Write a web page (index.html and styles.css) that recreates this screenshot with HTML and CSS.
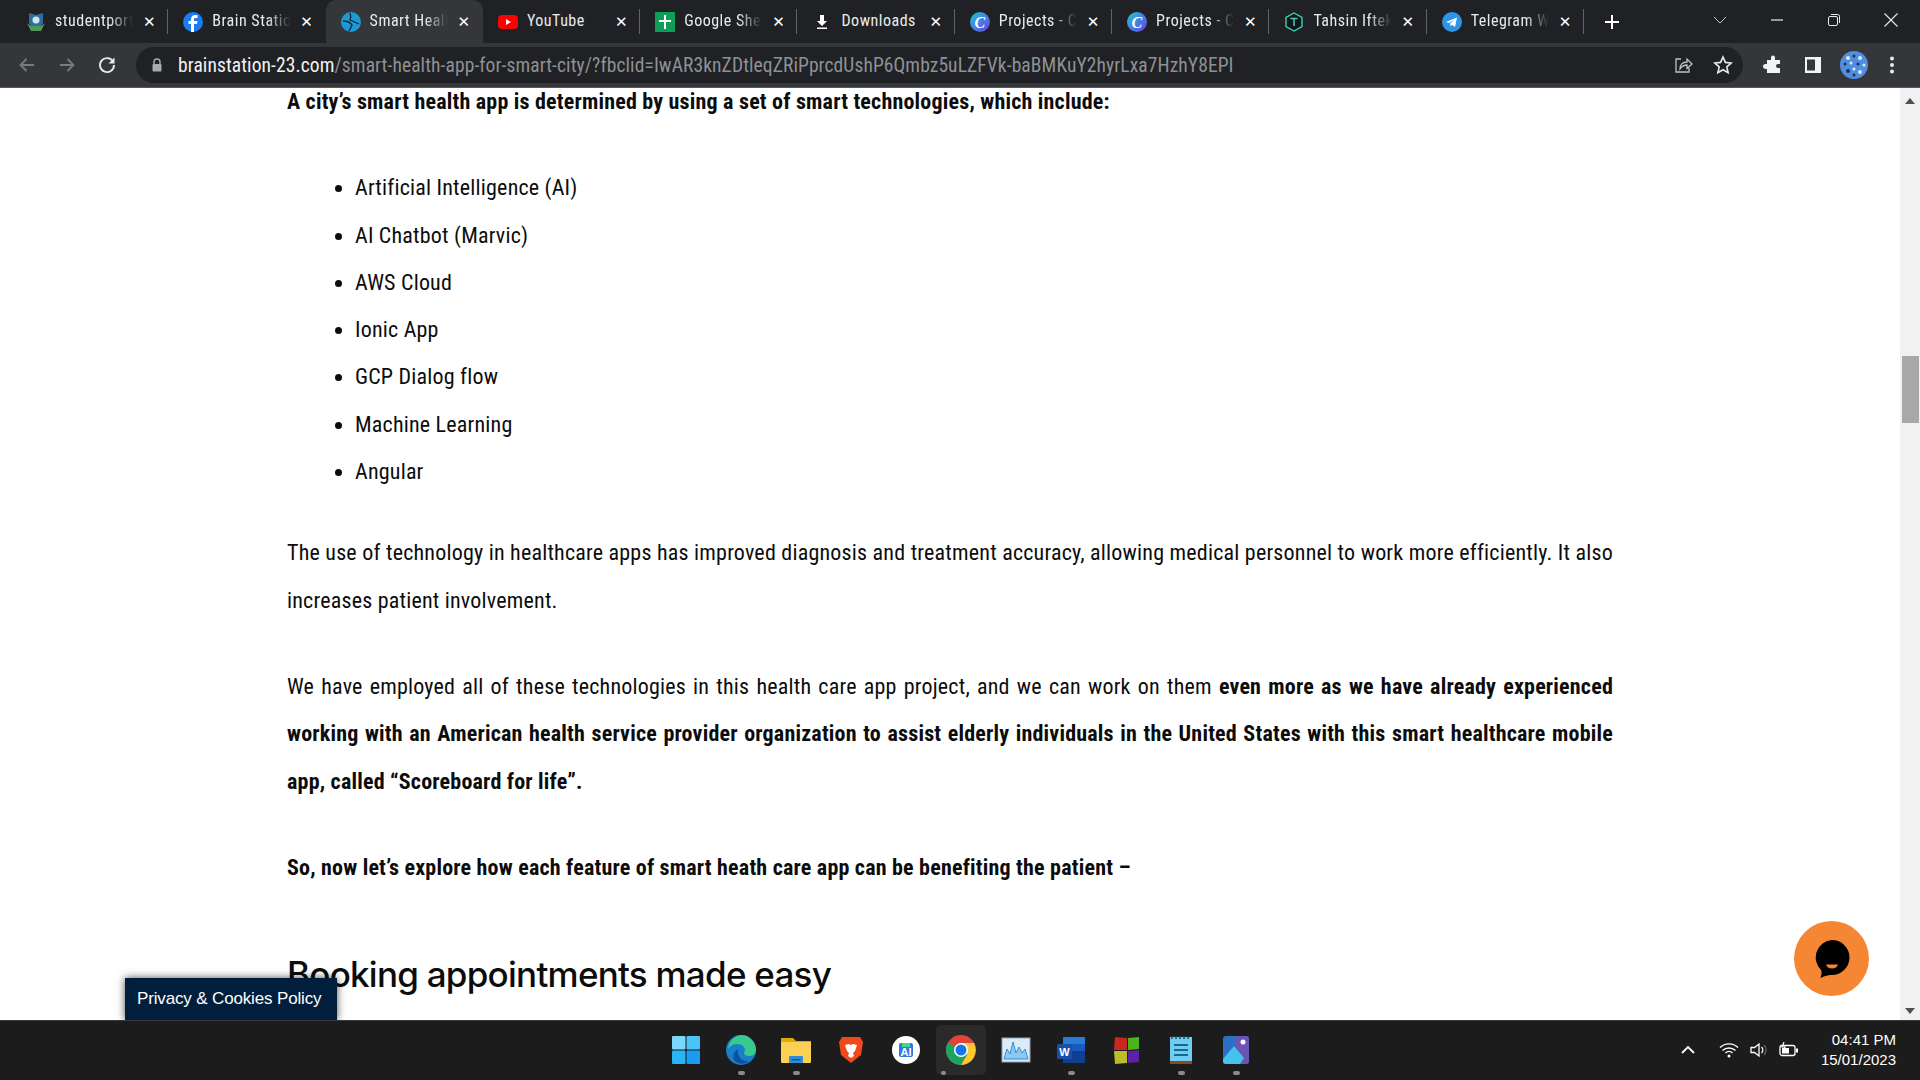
FILE: index.html
```html
<!DOCTYPE html>
<html lang="en">
<head>
    <meta charset="UTF-8">
    <title>Smart Health App</title>
    <link rel="stylesheet" href="styles.css">
</head>
<body>
<div class="screen">

    <!-- tab strip -->
    <div class="tabbar">
        <div class="tab">
            <svg class="favicon" viewBox="0 0 20 20"><path d="M3 1l7 2 7-2v10l-2 3H5l-2-3z" fill="#2f6f9f"/><circle cx="10" cy="8" r="3.500" fill="#cfe3f0"/><path d="M1 11l4 8h10l4-8-4 3H5z" fill="#4f9a57"/></svg>
            <span class="tab-title">studentportal</span>
            <span class="tab-close">✕</span>
        </div>
        <div class="tab">
            <svg class="favicon" viewBox="0 0 20 20"><circle cx="10" cy="10" r="10" fill="#1b7cf0"/><path d="M11 20v-8h3l.5-3H11V7.500c0-1 .5-1.500 1.600-1.500H14.500V3.200C13.800 3.100 13 3 12.200 3 9.700 3 8 4.500 8 7.200V9H5.500v3H8v8z" fill="#fff"/></svg>
            <span class="tab-title">Brain Station 23</span>
            <span class="tab-close">✕</span>
        </div>
        <div class="tab tab-active">
            <svg class="favicon" viewBox="0 0 20 20"><circle cx="10" cy="10" r="10" fill="#1d9ad6"/><path d="M2 9c4 0 7 1 9 4l-3 6M9 1c1 3 1 5 0 7l9 4" fill="none" stroke="#16222c" stroke-width="1.300"/></svg>
            <span class="tab-title">Smart Health App</span>
            <span class="tab-close">✕</span>
        </div>
        <div class="tab tab-nosep">
            <svg class="favicon" viewBox="0 0 20 20"><rect x="0" y="3" width="20" height="14" rx="4" fill="#f00"/><path d="M8 7l5 3-5 3z" fill="#fff"/></svg>
            <span class="tab-title tab-title-full">YouTube</span>
            <span class="tab-close">✕</span>
        </div>
        <div class="tab">
            <svg class="favicon" viewBox="0 0 20 20"><rect width="20" height="20" rx="1" fill="#0f9d58"/><path d="M9 3h2v5h5v2h-5v7H9v-7H4V8h5z" fill="#fff"/></svg>
            <span class="tab-title">Google Sheets</span>
            <span class="tab-close">✕</span>
        </div>
        <div class="tab">
            <svg class="favicon" viewBox="0 0 20 20"><path d="M8 3h4v6h3l-5 5-5-5h3zM5 15.500h10V17H5z" fill="#fff"/></svg>
            <span class="tab-title tab-title-full">Downloads</span>
            <span class="tab-close">✕</span>
        </div>
        <div class="tab">
            <svg class="favicon" viewBox="0 0 20 20"><defs><linearGradient id="canva" x1="0" y1="0" x2="1" y2="1"><stop offset="0" stop-color="#1ec8d8"/><stop offset="1" stop-color="#6a3de8"/></linearGradient></defs><circle cx="10" cy="10" r="10" fill="url(#canva)"/><text x="10" y="15.500" class="canva-c">C</text></svg>
            <span class="tab-title">Projects - Canva</span>
            <span class="tab-close">✕</span>
        </div>
        <div class="tab">
            <svg class="favicon" viewBox="0 0 20 20"><circle cx="10" cy="10" r="10" fill="url(#canva)"/><text x="10" y="15.500" class="canva-c">C</text></svg>
            <span class="tab-title">Projects - Canva</span>
            <span class="tab-close">✕</span>
        </div>
        <div class="tab">
            <svg class="favicon" viewBox="0 0 20 20"><path d="M10 1l8 4.500v9L10 19l-8-4.500v-9z" fill="#10181c" stroke="#3fd0b0" stroke-width="1.400"/><path d="M6.500 6.500h7M10 6.500V14" stroke="#3fd0b0" stroke-width="1.500" fill="none"/></svg>
            <span class="tab-title">Tahsin Iftekhar</span>
            <span class="tab-close">✕</span>
        </div>
        <div class="tab">
            <svg class="favicon" viewBox="0 0 20 20"><circle cx="10" cy="10" r="10" fill="#2f93e6"/><path d="M4 10l11-4.500-2 9.500-3-2.300-1.500 1.600-.4-2.700 4.500-4-5.800 3.500z" fill="#fff"/></svg>
            <span class="tab-title">Telegram Web</span>
            <span class="tab-close">✕</span>
        </div>
        <svg class="newtab" viewBox="0 0 16 16"><path d="M7 1h2v6h6v2H9v6H7V9H1V7h6z" fill="#fff"/></svg>
        <div class="window-controls">
            <svg class="win-icon" viewBox="0 0 16 16"><path d="M2 5l6 6 6-6" fill="none" stroke="#c4c7c5" stroke-width="1"/></svg>
            <svg class="win-icon" viewBox="0 0 16 16"><path d="M2 8h12" stroke="#e8eaed" stroke-width="1.200"/></svg>
            <svg class="win-icon" viewBox="0 0 16 16"><rect x="2.500" y="4.500" width="9" height="9" rx="1.500" fill="none" stroke="#e8eaed"/><path d="M5 2.500h6.500a2 2 0 012 2V11" fill="none" stroke="#e8eaed"/></svg>
            <svg class="win-icon" viewBox="0 0 16 16"><path d="M1.500 1.500l13 13M14.500 1.500l-13 13" stroke="#e8eaed" stroke-width="1.100"/></svg>
        </div>
    </div>

    <!-- address bar -->
    <div class="toolbar">
        <svg class="nav-icon" viewBox="0 0 20 20"><path d="M17 10H4M9.500 4L3.500 10l6 6" fill="none" stroke="#787b80" stroke-width="1.800"/></svg>
        <svg class="nav-icon" viewBox="0 0 20 20"><path d="M3 10h13M10.500 4l6 6-6 6" fill="none" stroke="#787b80" stroke-width="1.800"/></svg>
        <svg class="nav-icon" viewBox="0 0 20 20"><path d="M16 6.500A7 7 0 1017 10" fill="none" stroke="#e8eaed" stroke-width="1.900"/><path d="M17.500 2.500v6h-6z" fill="#e8eaed"/></svg>
        <div class="omnibox">
            <svg class="lock" viewBox="0 0 12 14"><path d="M3 6V4a3 3 0 016 0v2" fill="none" stroke="#a8abaf" stroke-width="1.400"/><rect x="1.500" y="6" width="9" height="7.500" rx="1" fill="#a8abaf"/></svg>
            <div class="url"><span class="url-host">brainstation-23.com</span>/smart-health-app-for-smart-city/?fbclid=IwAR3knZDtleqZRiPprcdUshP6Qmbz5uLZFVk-baBMKuY2hyrLxa7HzhY8EPI</div>
            <svg class="omni-icon" viewBox="0 0 20 20"><path d="M8 4H3v13h13v-4" fill="none" stroke="#bdc1c6" stroke-width="1.300"/><path d="M7 14c0-5 3-7 7-7V4l5 5-5 4.500V10c-3 0-5 1-7 4z" fill="none" stroke="#bdc1c6" stroke-width="1.300"/></svg>
            <svg class="omni-icon" viewBox="0 0 20 20"><path d="M10 2l2.400 5.400 5.800.6-4.400 3.900 1.300 5.800L10 14.700l-5.100 3 1.300-5.800L1.800 8l5.800-.6z" fill="none" stroke="#e8eaed" stroke-width="1.600"/></svg>
        </div>
        <svg class="tool-icon" viewBox="0 0 20 20"><path d="M8 2.500a2 2 0 014 0V5h5v4h-2a2 2 0 000 4h2v5H4v-4H2.500a2.500 2.500 0 010-5H4V5h4z" fill="#f1f3f4"/></svg>
        <svg class="tool-icon" viewBox="0 0 20 20"><rect x="2" y="2" width="16" height="16" fill="#f1f3f4"/><rect x="4" y="4.500" width="8" height="11" fill="#35363a"/></svg>
        <svg class="avatar" viewBox="0 0 28 28"><circle cx="14" cy="14" r="14" fill="#4f8fe0"/><circle cx="8" cy="7" r="2" fill="#dfe8f5"/><circle cx="14" cy="5" r="1.500" fill="#25304a"/><circle cx="20" cy="7" r="2" fill="#dfe8f5"/><circle cx="5" cy="13" r="1.500" fill="#25304a"/><circle cx="11" cy="12" r="1.500" fill="#dfe8f5"/><circle cx="18" cy="13" r="1.500" fill="#25304a"/><circle cx="24" cy="14" r="1.500" fill="#dfe8f5"/><circle cx="8" cy="20" r="2" fill="#25304a"/><circle cx="14" cy="18" r="1.500" fill="#dfe8f5"/><circle cx="20" cy="21" r="2" fill="#dfe8f5"/><circle cx="14" cy="24" r="1.500" fill="#25304a"/></svg>
        <svg class="tool-icon menu-icon" viewBox="0 0 20 20"><circle cx="10" cy="3.500" r="2" fill="#e8eaed"/><circle cx="10" cy="10" r="2" fill="#e8eaed"/><circle cx="10" cy="16.500" r="2" fill="#e8eaed"/></svg>
    </div>

    <!-- page -->
    <div class="viewport">
        <div class="page">
            <div class="article">
                <p class="lead"><strong>A city’s smart health app is determined by using a set of smart technologies, which include:</strong></p>
                <ul class="tech-list">
                    <li>Artificial Intelligence (AI)</li>
                    <li>AI Chatbot (Marvic)</li>
                    <li>AWS Cloud</li>
                    <li>Ionic App</li>
                    <li>GCP Dialog flow</li>
                    <li>Machine Learning</li>
                    <li>Angular</li>
                </ul>
                <p>The use of technology in healthcare apps has improved diagnosis and treatment accuracy, allowing medical personnel to work more efficiently. It also increases patient involvement.</p>
                <p>We have employed all of these technologies in this health care app project, and we can work on them <strong>even more as we have already experienced working with an American health service provider organization to assist elderly individuals in the United States with this smart healthcare mobile app, called “Scoreboard for life”.</strong></p>
                <p><strong>So, now let’s explore how each feature of smart heath care app can be benefiting the patient –</strong></p>
            </div>
            <h2 class="section-title">Booking appointments made easy</h2>
        </div>
        <div class="scrollbar">
            <span class="arrow-up"></span>
            <span class="thumb"></span>
            <span class="arrow-down"></span>
        </div>
        <div class="cookie-badge">Privacy &amp; Cookies Policy</div>
        <div class="chat-button">
            <svg viewBox="0 0 36 38" class="chat-icon"><path d="M18 0a17.500 17.500 0 110 35c-3 0-5 0-11.500 3 1-3 1.500-6 .5-8A17.500 17.500 0 0118 0z" fill="#000"/><path d="M12 24.500h12c-1 3-3.500 4-6 4s-5-1-6-4z" fill="#f58634"/></svg>
        </div>
    </div>

    <!-- windows taskbar -->
    <div class="taskbar">
        <div class="task-spacer"></div>
        <div class="task-icons">
            <div class="task-item">
                <svg viewBox="0 0 30 30"><rect x="1" y="1" width="13.500" height="13.500" rx="1" fill="#7bd6fb"/><rect x="15.500" y="1" width="13.500" height="13.500" rx="1" fill="#4cc2f8"/><rect x="1" y="15.500" width="13.500" height="13.500" rx="1" fill="#2ab4f5"/><rect x="15.500" y="15.500" width="13.500" height="13.500" rx="1" fill="#1a9df0"/></svg>
            </div>
            <div class="task-item task-open">
                <svg viewBox="0 0 30 30"><circle cx="15" cy="15" r="15" fill="#1a7fc9"/><path d="M15 0a15 15 0 0115 15c0 4-3 6-7 6-3 0-5-1-5-3 0-1 1-2 1-3 0-3-3-6-8-6-4 0-7 2-9 5A15 15 0 0115 0z" fill="#38c98d"/><path d="M12 17c0 6 5 10 11 9-3 3-10 4-14 0-3-3-2-9 3-12-1 1 0 2 0 3z" fill="#0c4fa0"/></svg>
            </div>
            <div class="task-item task-open">
                <svg viewBox="0 0 30 30"><path d="M0 3h12l3 3h15v5H0z" fill="#e0a80d"/><rect y="7" width="30" height="21" rx="1" fill="#fcd053"/><rect x="8" y="21" width="14" height="7" rx="1" fill="#2a8fd8"/><rect x="10.500" y="24" width="9" height="1.500" fill="#0f5a9a"/></svg>
            </div>
            <div class="task-item">
                <svg viewBox="0 0 30 30"><path d="M6 2h18l3 5-2 13-10 8-10-8L3 7z" fill="#f0491c"/><path d="M9 10l4-1 2 1 2-1 4 1-2 6-2 2 1 3-3 2-3-2 1-3-2-2z" fill="#fff"/></svg>
            </div>
            <div class="task-item">
                <svg viewBox="0 0 30 30"><ellipse cx="15" cy="15" rx="14" ry="14" fill="#fff"/><rect x="8" y="8" width="14" height="14" rx="2" fill="#2f78e4"/><path d="M11 8h8v4h-8z" fill="#3ddc84"/><text x="15" y="21" class="studio-a">AI</text></svg>
            </div>
            <div class="task-item task-active">
                <svg viewBox="0 0 30 30"><circle cx="15" cy="15" r="15" fill="#de4437"/><path d="M15 15L2 7.500A15 15 0 0015 30l6.500-11z" fill="#1da462"/><path d="M15 8h13a15 15 0 01-13 22l6.500-11z" fill="#fcc934"/><circle cx="15" cy="15" r="7" fill="#fff"/><circle cx="15" cy="15" r="5.500" fill="#1a73e8"/></svg>
            </div>
            <div class="task-item">
                <svg viewBox="0 0 30 30"><rect x="1" y="3" width="28" height="24" fill="#dcebf7" stroke="#8ea3b5"/><path d="M3 24l3-10 3 5 3-12 3 11 3-6 3 6 3-4 3 10z" fill="#8cc8ef" stroke="#2f8fd6"/></svg>
            </div>
            <div class="task-item task-open">
                <svg viewBox="0 0 30 30"><rect x="7" y="2" width="22" height="26" rx="1" fill="#2b7cd3"/><rect x="7" y="9" width="22" height="7" fill="#185abd"/><rect x="7" y="16" width="22" height="12" fill="#103f91"/><rect x="1" y="9" width="15" height="15" rx="1.500" fill="#1a4fa8"/><text x="8.500" y="21" class="word-w">W</text></svg>
            </div>
            <div class="task-item">
                <svg viewBox="0 0 30 30"><path d="M4 2l12 1v12H3z" fill="#c7281f"/><path d="M17 3l11-1v12l-11 1z" fill="#4cb51c"/><path d="M3 16h13v12L4 29z" fill="#bcbc26"/><path d="M17 16l11-1 0 12-11 1z" fill="#5b22a8"/></svg>
            </div>
            <div class="task-item task-open">
                <svg viewBox="0 0 30 30"><rect x="4" y="2" width="22" height="26" fill="#6ecdf0"/><rect x="4" y="26" width="22" height="3" fill="#8a4b20"/><path d="M8 10h14M8 15h14M8 20h14" stroke="#16688f" stroke-width="2"/><path d="M6 1v3M10 1v3M14 1v3M18 1v3M22 1v3" stroke="#12506f" stroke-width="1.500"/></svg>
            </div>
            <div class="task-item task-open">
                <svg viewBox="0 0 30 30"><rect x="2" y="1" width="26" height="28" rx="3" fill="#2c6fc5"/><rect x="14" y="1" width="14" height="28" rx="3" fill="#6a55b5"/><circle cx="22" cy="7" r="2.500" fill="#fff"/><path d="M2 24l11-13 10 12-4 6H5a3 3 0 01-3-3z" fill="#43c3ee"/></svg>
            </div>
        </div>
        <div class="tray">
            <svg class="tray-chevron" viewBox="0 0 16 10"><path d="M2 8l6-6 6 6" fill="none" stroke="#fff" stroke-width="1.800"/></svg>
            <svg class="tray-icon" viewBox="0 0 20 16"><path d="M1 5.500a13 13 0 0118 0M3.500 8.500a9.500 9.500 0 0113 0M6.500 11a5 5 0 017 0" fill="none" stroke="#fff" stroke-width="1.400"/><circle cx="10" cy="14" r="1.500" fill="#fff"/></svg>
            <svg class="tray-icon" viewBox="0 0 20 16"><path d="M2 5.500h3.500L10 2v12l-4.500-3.500H2z" fill="none" stroke="#fff" stroke-width="1.300"/><path d="M12.500 5a4 4 0 010 6" fill="none" stroke="#fff" stroke-width="1.200"/><path d="M15 3a7 7 0 010 10" fill="none" stroke="#666" stroke-width="1.200"/></svg>
            <svg class="tray-icon" viewBox="0 0 20 16"><rect x="1" y="3.500" width="15" height="10" rx="2" fill="none" stroke="#fff" stroke-width="1.300"/><rect x="3" y="6" width="7" height="5.500" fill="#fff"/><rect x="17" y="6.500" width="2" height="4" fill="#fff"/><path d="M5 0L3 5h3l-1 3" fill="none" stroke="#fff" stroke-width="1.200"/></svg>
            <div class="clock">
                <div>04:41 PM</div>
                <div>15/01/2023</div>
            </div>
        </div>
    </div>
</div>
</body>
</html>
```

FILE: styles.css
```css
html, body {
    margin: 0;
    padding: 0;
}

.screen {
    width: 1920px;
    height: 1080px;
    display: flex;
    flex-direction: column;
    overflow: hidden;
    background: #fff;
}

/* tab strip */
.tabbar {
    height: 43px;
    flex: none;
    display: flex;
    align-items: center;
    padding-left: 11px;
    background: #202124;
    font-family: Roboto, "Liberation Sans", sans-serif;
    font-stretch: 75%;
}

.tab {
    width: 157.300px;
    height: 43px;
    box-sizing: border-box;
    flex: none;
    display: flex;
    align-items: center;
    padding: 0 12px 0 15px;
    position: relative;
    color: #e8eaed;
    font-size: 16px;
    letter-spacing: 0.500px;
}

.tab::after {
    content: "";
    position: absolute;
    right: 0;
    top: 9px;
    height: 25px;
    width: 1px;
    background: #5f6368;
}

.tab:nth-child(2)::after,
.tab:nth-child(3)::after {
    display: none;
}

.tab-active {
    background: #35363a;
    border-radius: 10px 10px 0 0;
}

.favicon {
    width: 20px;
    height: 20px;
    flex: none;
}

.tab-title {
    flex: 1;
    margin: -2px 0 0 9px;
    overflow: hidden;
    white-space: nowrap;
    -webkit-mask-image: linear-gradient(90deg, #000 70%, transparent 100%);
    mask-image: linear-gradient(90deg, #000 70%, transparent 100%);
}

.tab-title-full {
    -webkit-mask-image: none;
    mask-image: none;
}

.tab-close {
    flex: none;
    width: 14px;
    margin-left: 9px;
    font: bold 15px "DejaVu Sans", sans-serif;
    letter-spacing: 0;
    color: #fff;
    text-align: center;
}

.canva-c {
    font: italic bold 16px "Liberation Serif", serif;
    fill: #fff;
    text-anchor: middle;
}

.newtab {
    width: 16px;
    height: 16px;
    margin-left: 20px;
    flex: none;
}

.window-controls {
    margin-left: auto;
    display: flex;
    gap: 41px;
    padding-right: 21px;
    margin-top: -4px;
}

.win-icon {
    width: 16px;
    height: 16px;
}

/* address bar */
.toolbar {
    height: 45px;
    flex: none;
    display: flex;
    align-items: center;
    background: #35363a;
    padding-left: 17px;
    border-bottom: 1px solid #55575b;
    box-sizing: border-box;
}

.nav-icon {
    width: 20px;
    height: 20px;
    flex: none;
    margin-right: 20px;
}

.omnibox {
    flex: none;
    width: 1607px;
    height: 36px;
    margin-left: -1px;
    box-sizing: border-box;
    padding: 0 10px 0 15px;
    display: flex;
    align-items: center;
    background: #202124;
    border-radius: 18px;
}

.lock {
    width: 12px;
    height: 14px;
    flex: none;
}

.url {
    flex: 1;
    margin-left: 15px;
    font-family: Roboto, "Liberation Sans", sans-serif;
    font-stretch: 75%;
    font-size: 19.500px;
    letter-spacing: 0.100px;
    color: #8e9196;
    white-space: nowrap;
    overflow: hidden;
}

.url-host {
    color: #f1f3f4;
}

.omni-icon {
    width: 20px;
    height: 20px;
    flex: none;
    margin-left: 20px;
}

.tool-icon {
    width: 20px;
    height: 20px;
    flex: none;
    margin-left: 20px;
}

.avatar {
    width: 28px;
    height: 28px;
    flex: none;
    margin-left: 17px;
}

.menu-icon {
    margin-left: 14px;
}

/* page */
.viewport {
    flex: 1;
    min-height: 0;
    display: flex;
    position: relative;
    overflow: hidden;
}

.page {
    flex: 1;
    min-width: 0;
    margin-top: -10px;
    padding: 0 287px;
    box-sizing: border-box;
    color: #0c0c0c;
}

.article {
    width: 1326px;
    font-family: Roboto, "Liberation Sans", sans-serif;
    font-stretch: 75%;
    font-size: 22px;
    letter-spacing: 0.200px;
    line-height: 47.300px;
    text-align: justify;
}

.article p {
    margin: 0 0 39px;
}

.article .lead {
    margin-bottom: 39px;
}

.tech-list {
    margin: 0 0 34px;
    padding: 0 0 0 68px;
    list-style: disc;
}

.section-title {
    margin: 59px 0 0;
    font-family: Inter, "Liberation Sans", sans-serif;
    font-weight: 500;
    font-size: 35px;
    letter-spacing: -0.750px;
    line-height: 48px;
    color: #0c0c0c;
}

.scrollbar {
    width: 20px;
    flex: none;
    background: #f1f1f1;
    position: relative;
}

.arrow-up,
.arrow-down {
    position: absolute;
    left: 5px;
    width: 0;
    height: 0;
    border-left: 5px solid transparent;
    border-right: 5px solid transparent;
}

.arrow-up {
    top: 10px;
    border-bottom: 6px solid #505050;
}

.arrow-down {
    bottom: 6px;
    border-top: 6px solid #505050;
}

.thumb {
    position: absolute;
    top: 268px;
    left: 2px;
    width: 17px;
    height: 67px;
    background: #a8a8a8;
}

.cookie-badge {
    position: absolute;
    left: 125px;
    bottom: 0;
    width: 212px;
    height: 42px;
    box-sizing: border-box;
    padding-left: 12px;
    background: #011e3c;
    color: #fff;
    font: 17px/42px "Liberation Sans", sans-serif;
    letter-spacing: -0.150px;
    box-shadow: 0 0 8px rgba(0, 0, 0, 0.7);
}

.chat-button {
    position: absolute;
    left: 1794px;
    top: 833px;
    width: 75px;
    height: 75px;
    display: flex;
    align-items: center;
    justify-content: center;
    border-radius: 50%;
    background: #f58634;
}

.chat-icon {
    width: 36px;
    height: 38px;
}

/* windows taskbar */
.taskbar {
    height: 60px;
    flex: none;
    box-sizing: border-box;
    border-top: 1px solid #3a3a3a;
    padding-bottom: 2px;
    background: #1c1c1c;
    display: grid;
    grid-template-columns: 1fr auto 1fr;
    align-items: center;
}

.task-icons {
    display: flex;
    gap: 5px;
    margin-left: 2px;
}

.task-item {
    width: 50px;
    height: 50px;
    display: flex;
    align-items: center;
    justify-content: center;
    position: relative;
    border-radius: 5px;
}

.task-item svg {
    width: 30px;
    height: 30px;
}

.task-active {
    background: #2a2a2a;
}

.task-open::after,
.task-active::after {
    content: "";
    position: absolute;
    bottom: 0;
    left: 50%;
    margin-left: -3px;
    width: 7px;
    height: 4px;
    border-radius: 2px;
    background: #8b8b8b;
}

.task-active::after {
    margin-left: -20px;
    width: 5px;
}

.tray {
    display: flex;
    align-items: center;
    justify-content: flex-end;
    padding-right: 24px;
}

.tray-chevron {
    width: 16px;
    height: 10px;
    margin-right: 23px;
}

.tray-icon {
    width: 20px;
    height: 16px;
    margin-right: 10px;
}

.clock {
    margin-left: 12px;
    font: 15px/20px "Liberation Sans", sans-serif;
    color: #fff;
    text-align: right;
}

.studio-a {
    font: bold 11px "Liberation Sans", sans-serif;
    fill: #fff;
    text-anchor: middle;
}

.word-w {
    font: bold 11px "Liberation Sans", sans-serif;
    fill: #fff;
    text-anchor: middle;
}
```
